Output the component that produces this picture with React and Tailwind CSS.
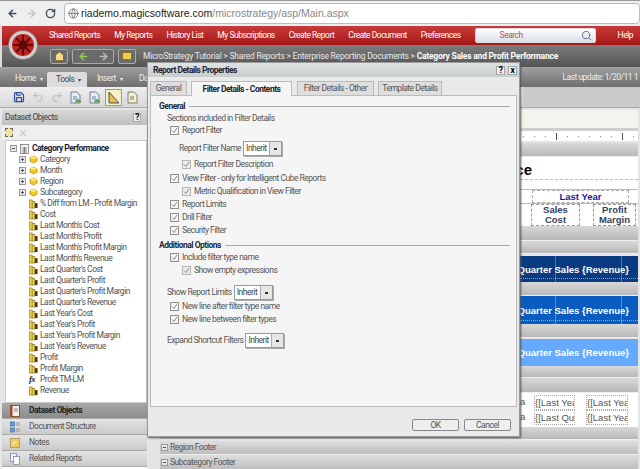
import React from "react";
import { ArrowLeft, ArrowRight, RotateCw, Globe, Search, X, Save, Undo2, Redo2, Home } from "lucide-react";

const navItems = ["Shared Reports", "My Reports", "History List", "My Subscriptions", "Create Report", "Create Document", "Preferences"];

const metrics = [
  "% Diff from LM - Profit Margin", "Cost", "Last Month's Cost", "Last Month's Profit", "Last Month's Profit Margin",
  "Last Month's Revenue", "Last Quarter's Cost", "Last Quarter's Profit", "Last Quarter's Profit Margin", "Last Quarter's Revenue",
  "Last Year's Cost", "Last Year's Profit", "Last Year's Profit Margin", "Last Year's Revenue", "Profit", "Profit Margin",
];

function Cube() {
  return (
    <svg width="9" height="9" viewBox="0 0 10 10" className="shrink-0">
      <path d="M1 3 L5 1 L9 3 L9 7 L5 9 L1 7 Z" fill="#f0c419" stroke="#a08214" strokeWidth="0.6" />
      <path d="M1 3 L5 4.6 L9 3 L5 1 Z" fill="#fbe77a" />
    </svg>
  );
}

function MetricIcon() {
  return (
    <svg width="9" height="10" viewBox="0 0 10 10" className="shrink-0">
      <rect x="0.5" y="0.5" width="3" height="9" fill="#f2d64b" stroke="#7a6410" strokeWidth="0.6" />
      <rect x="3.5" y="2" width="3" height="7.5" fill="#f2d64b" stroke="#7a6410" strokeWidth="0.6" />
      <rect x="6.5" y="4" width="3" height="5.5" fill="#4a3808" />
    </svg>
  );
}

function ReportIcon() {
  return (
    <svg width="9" height="10" viewBox="0 0 9 10" className="shrink-0">
      <rect x="0.5" y="0.5" width="8" height="9" fill="#f4f4f4" stroke="#666" strokeWidth="0.7" />
      <path d="M2 4 H7 M2 6 H7 M2 8 H7 M4.5 3 V9" stroke="#555" strokeWidth="0.7" />
    </svg>
  );
}

function ExpandBox({ minus }) {
  return (
    <span className="relative w-[7px] h-[7px] shrink-0 border border-[#9a9a9a] bg-[#e8e8e8] flex items-center justify-center">
      <span className="w-[3px] h-px bg-[#555]" />
      {!minus && <span className="absolute w-px h-[3px] bg-[#555]" />}
    </span>
  );
}

function Check({ dim }) {
  return (
    <span className={`w-[9px] h-[9px] shrink-0 border flex items-center justify-center ${dim ? "border-[#b5b5b5] bg-[#ececec]" : "border-[#8f8f8f] bg-[#f4f4f4]"}`}>
      <svg width="7" height="7" viewBox="0 0 7 7">
        <path d="M1 3.5 L3 5.5 L6 1" fill="none" stroke="#8a8a8a" strokeWidth="1" />
      </svg>
    </span>
  );
}

function CheckRow({ label, indent, dim, className = "" }) {
  return (
    <div className={`h-[13px] flex items-center gap-[3px] ${indent ? "pl-[31px]" : "pl-[19px]"} ${className}`}>
      <Check dim={dim} />
      <span>{label}</span>
    </div>
  );
}

function Select() {
  return (
    <span className="w-[39px] h-[15px] flex border border-[#9a9a9a] bg-white shadow-[1px_1px_0_#aaa]">
      <span className="flex-1 pl-[2px] leading-[13px] text-[#444]">Inherit</span>
      <span className="w-[12px] bg-[#e6e6e6] border-l border-[#aaa] flex items-center justify-center">
        <span className="w-[3px] h-[2px] bg-[#333]" />
      </span>
    </span>
  );
}

function Legend({ children }) {
  return (
    <div className="h-[12px] flex items-center gap-[4px] pl-[8px] pr-[6px]">
      <span className="font-bold text-[#1c2a44]">{children}</span>
      <span className="flex-1 h-px bg-[#aaa]" />
    </div>
  );
}

function Band({ h }) {
  return <div className={`${h} shrink-0 bg-gradient-to-b from-[#d8d8d8] to-[#b8b8b8] border-b border-[#eee]`} />;
}

function BlueRow({ h, bg, lines }) {
  return (
    <div className={`${h} shrink-0 relative flex items-center font-bold text-white text-[9.5px] tracking-normal whitespace-nowrap ${bg}`}>
      <div className="w-[469px] text-right">Last Quarter Sales {"{Revenue}"}</div>
      {lines && <span className="absolute left-[395px] top-0 bottom-0 w-px bg-white/30" />}
      {lines && <span className="absolute left-[461px] top-0 bottom-0 w-px bg-white/30" />}
      {lines && <span className="absolute left-[360px] right-0 bottom-[3px] border-b border-dotted border-white/50" />}
    </div>
  );
}

function PageIcon({ fill = "#e4edf5", mark }) {
  return (
    <span className="w-[17px] h-[17px] flex items-center justify-center">
      <svg width="13" height="13" viewBox="0 0 13 13">
        <path d="M2 1 H8 L11 4 V12 H2 Z" fill={fill} stroke="#667" strokeWidth="0.8" />
        <path d="M4 6 H8 M4 8 H8" stroke="#3a6a9a" strokeWidth="0.8" />
        {mark && <path d="M6 11 L9 8 L12 11 Z" fill={mark} stroke="#2e7d32" strokeWidth="0.5" />}
      </svg>
    </span>
  );
}

function AccordionItem({ label, active, icon }) {
  return (
    <div className={`h-[16px] flex items-center gap-[9px] pl-[8px] border-b border-[#aaa] ${active ? "bg-gradient-to-b from-[#a8a8a8] to-[#8c8c8c] font-bold text-[#222]" : "bg-gradient-to-b from-[#e4e4e4] to-[#cacaca] text-[#555]"}`}>
      <svg width="10" height="12" viewBox="0 0 10 12" className="shrink-0">
        {icon}
      </svg>
      <span>{label}</span>
    </div>
  );
}

function MenuTab({ label, className }) {
  return (
    <span className={`flex gap-[4px] ${className}`}>
      {label}
      <span className="text-[6px] leading-[12px]">▾</span>
    </span>
  );
}

export default function App() {
  return (
    <div className="relative w-[640px] h-[469px] overflow-hidden flex flex-col bg-[#dcdcdc] font-['Roboto',sans-serif] text-[8.5px] leading-[11px] tracking-[-0.5px] text-[#555]">
      {/* browser bar */}
      <div className="h-[26px] shrink-0 flex items-center gap-[8px] pl-[7px] bg-[#efefef] border-t border-[#999]">
        <ArrowLeft className="w-[11px] h-[11px] text-[#3d4f66]" strokeWidth={3.5} />
        <ArrowRight className="w-[11px] h-[11px] text-[#c8c8c8]" strokeWidth={3.5} />
        <RotateCw className="w-[11px] h-[11px] text-[#3d4f66]" strokeWidth={3} />
        <div className="flex-1 h-[21px] flex items-center gap-[2px] pl-[3px] bg-white border border-[#bbb] rounded-[4px] text-[10.5px] tracking-normal font-['Liberation_Sans',sans-serif]">
          <Globe className="w-[11px] h-[11px] text-[#777]" />
          <span className="text-[#222]">riademo.magicsoftware.com<span className="text-[#888]">/microstrategy/asp/Main.aspx</span></span>
        </div>
      </div>

      {/* red nav */}
      <div className="h-[19px] shrink-0 flex items-center pl-[47px] pr-[7px] ml-[2px] bg-gradient-to-b from-[#c93a3a] to-[#a51616] text-white whitespace-nowrap">
        <div className="flex gap-[14px]">
          {navItems.map((item) => (
            <span key={item}>{item}</span>
          ))}
        </div>
        <div className="w-[121px] h-[15px] ml-[14px] flex items-center justify-between pl-[24px] pr-[3px] rounded-[2px] border border-[#ddd] bg-gradient-to-b from-white to-[#d6e0e8] text-[#c05050]">
          Search
          <Search className="w-[11px] h-[11px] text-[#667]" />
        </div>
        <span className="ml-auto">Help</span>
      </div>

      {/* breadcrumb bar */}
      <div className="h-[22px] shrink-0 flex items-center ml-[2px] pl-[48px] bg-gradient-to-b from-[#7c7c7c] to-[#555] text-[#e8e8e8] tracking-[-0.22px] whitespace-nowrap">
        <span className="w-[18px] h-[15px] flex items-center justify-center border border-[#aaa] rounded-[2px] bg-[#6a6a6a]">
          <Home className="w-[11px] h-[11px] text-[#7a5a20] fill-[#f5dc90]" />
        </span>
        <span className="ml-[4px] w-[42px] h-[15px] flex items-center justify-around border border-[#aaa] rounded-[2px] bg-[#6a6a6a]">
          <ArrowLeft className="w-[11px] h-[11px] text-[#8fd14f]" strokeWidth={3.5} />
          <ArrowRight className="w-[11px] h-[11px] text-[#bbb]" strokeWidth={3.5} />
        </span>
        <span className="ml-[4px] w-[18px] h-[15px] flex items-center justify-center border border-[#aaa] rounded-[2px] bg-[#6a6a6a]">
          <span className="w-[10px] h-[8px] bg-[#f0cf50] border border-[#8a7020]" />
        </span>
        <span className="ml-[7px]">MicroStrategy Tutorial &gt; Shared Reports &gt; Enterprise Reporting Documents &gt; <b className="text-white">Category Sales and Profit Performance</b></span>
      </div>

      {/* menu tabs */}
      <div className="h-[20px] shrink-0 flex items-end pl-[15px] pr-[2px] bg-gradient-to-b from-[#a0a0a0] to-[#6e6e6e] text-[#eee] whitespace-nowrap">
        <MenuTab label="Home" className="h-[14px] w-[32px]" />
        <MenuTab label="Tools" className="h-[15px] w-[40px] pl-[9px] pt-[2px] rounded-t-[2px] bg-[#dcdcdc] text-[#444]" />
        <MenuTab label="Insert" className="h-[14px] w-[42px] ml-[10px]" />
        <span className="h-[14px]">Data</span>
        <span className="h-[14px] ml-auto self-center pt-[2px]">Last update: 1/20/11 1</span>
      </div>

      {/* toolbar */}
      <div className="h-[21px] shrink-0 flex items-center gap-[2px] pl-[10px] bg-gradient-to-b from-[#efefef] to-[#d8d8d8] border-b border-[#aaa]">
        <span className="w-[17px] h-[17px] flex items-center justify-center">
          <Save className="w-[12px] h-[12px] text-[#2c4f9e]" strokeWidth={2.5} />
        </span>
        <span className="w-[17px] h-[17px] flex items-center justify-center">
          <Undo2 className="w-[12px] h-[12px] text-[#c4c4c4]" strokeWidth={2.5} />
        </span>
        <span className="w-[17px] h-[17px] flex items-center justify-center">
          <Redo2 className="w-[12px] h-[12px] text-[#c4c4c4]" strokeWidth={2.5} />
        </span>
        <PageIcon mark="#5cb85c" />
        <PageIcon mark="#5cb85c" />
        <span className="w-[17px] h-[17px] flex items-center justify-center border border-[#999] bg-[#f6efc8]">
          <svg width="13" height="13" viewBox="0 0 13 13">
            <path d="M2 1 V12 H12 Z" fill="#f0c030" stroke="#3a4f8a" strokeWidth="1" />
          </svg>
        </span>
        <PageIcon fill="#f5efc0" />
        <span className="flex-1 self-stretch ml-[380px] bg-[#cacaca]" />
      </div>

      <div className="flex-1 flex min-h-0">
        {/* dataset objects panel */}
        <div className="w-[147px] shrink-0 flex flex-col bg-[#e6e6e6] pl-[2px]">
          <div className="h-[15px] mt-[2px] shrink-0 flex items-center justify-between pl-[3px] bg-gradient-to-b from-[#d8d8d8] to-[#c0c0c0] text-[#444]">
            Dataset Objects
            <span className="w-[8px] h-[9px] mr-[6px] flex items-center justify-center bg-[#eee] border border-[#aaa] text-black font-bold leading-none">?</span>
          </div>
          <div className="h-[15px] shrink-0 flex items-center gap-[5px] pl-[3px] bg-[#efefef]">
            <span className="w-[8px] h-[9px] border border-dashed border-[#666] bg-[#f4e39a]" />
            <X className="w-[10px] h-[10px] text-[#ccc]" strokeWidth={3} />
          </div>
          <div className="flex-1 pt-[2px] pl-[4px] ml-[3px] bg-white border border-[#c8c8c8] whitespace-nowrap">
            <div className="h-[11px] flex items-center gap-[3px] font-bold text-[#1c2333]">
              <ExpandBox minus />
              <ReportIcon />
              Category Performance
            </div>
            {["Category", "Month", "Region", "Subcategory"].map((name) => (
              <div key={name} className="h-[11px] flex items-center gap-[3px] pl-[9px]">
                <ExpandBox />
                <Cube />
                <span className="-ml-px">{name}</span>
              </div>
            ))}
            {metrics.map((name) => (
              <div key={name} className="h-[11px] flex items-center gap-[2px] pl-[19px]">
                <MetricIcon />
                {name}
              </div>
            ))}
            <div className="h-[11px] flex items-center gap-[2px] pl-[19px]">
              <span className="w-[9px] font-['Liberation_Serif',serif] italic font-bold text-[#222]">fx</span>
              Profit TM-LM
            </div>
            <div className="h-[11px] flex items-center gap-[2px] pl-[19px]">
              <MetricIcon />
              Revenue
            </div>
          </div>
          <AccordionItem
            label="Dataset Objects"
            active
            icon={
              <>
                <rect x="0.5" y="0.5" width="9" height="11" fill="#f4efe6" stroke="#7a3a20" strokeWidth="0.8" />
                <rect x="0.5" y="0.5" width="2" height="11" fill="#b5451f" />
                <path d="M4 4 H8 M4 6 H8" stroke="#778" strokeWidth="0.8" />
              </>
            }
          />
          <AccordionItem
            label="Document Structure"
            icon={
              <>
                <rect x="0.5" y="1" width="4" height="4" fill="#6a9ad8" stroke="#35609a" strokeWidth="0.6" />
                <rect x="0.5" y="7" width="4" height="4" fill="#6a9ad8" stroke="#35609a" strokeWidth="0.6" />
                <path d="M6 2 H10 M6 4 H10 M6 8 H10 M6 10 H10" stroke="#888" strokeWidth="0.8" />
              </>
            }
          />
          <AccordionItem
            label="Notes"
            icon={
              <>
                <rect x="0.5" y="1.5" width="9" height="9" fill="#f2c860" stroke="#a08a50" strokeWidth="0.7" />
                <path d="M2 8 L6 4" stroke="#f8e4a8" strokeWidth="1.5" />
              </>
            }
          />
          <AccordionItem
            label="Related Reports"
            icon={
              <>
                <rect x="0.5" y="0.5" width="6" height="8" fill="#f4f4f4" stroke="#6a7f9a" strokeWidth="0.7" />
                <rect x="3.5" y="3.5" width="6" height="8" fill="#fafafa" stroke="#6a7f9a" strokeWidth="0.7" />
              </>
            }
          />
          <div className="h-[2px] shrink-0 bg-white" />
        </div>

        {/* layout canvas */}
        <div className="flex-1 flex flex-col pl-[13px] pr-[2px] bg-[#e4e4e4] font-['Liberation_Sans',sans-serif] tracking-normal whitespace-nowrap">
          <div className="h-[2px] shrink-0" />
          <div className="h-[18px] shrink-0 -ml-[13px] bg-[#f4f4ee]" />
          <div className="h-[3px] shrink-0 -ml-[13px] bg-[#cfcfcf]" />
          <div className="h-[10px] shrink-0 flex items-center gap-[10px] pl-[363px] bg-white">
            {Array.from({ length: 11 }).map((_, i) => (
              <span key={i} className={`w-px ${i % 6 === 3 ? "h-[7px] bg-[#555]" : "h-px bg-[#888]"}`} />
            ))}
          </div>
          <div className="h-[2px] shrink-0" />
          <Band h="h-[14px]" />
          <div className="h-[23px] pt-[3px] shrink-0 flex items-center bg-white border-b border-dashed border-[#bbb] text-black font-bold text-[15px]">
            <div className="w-[372px] text-right">Category Sales and Profit Performance</div>
          </div>
          <div className="h-[9px] shrink-0 bg-white" />
          <div className="h-[14px] shrink-0 flex bg-white border-t border-[#bbb] font-bold text-[9.5px] leading-[12px] text-[#1a1a9a]">
            <div className="w-[372px]" />
            <div className="w-[97px] text-center border border-dashed border-[#aaa]">Last Year</div>
          </div>
          <div className="h-[23px] shrink-0 flex bg-white border-t border-[#bbb] font-bold text-[9.5px] text-[#35405a] leading-[10px]">
            <div className="w-[371px]" />
            <div className="w-[49px] text-center border border-dashed border-[#999]">Sales<br />Cost</div>
            <div className="w-[13px]" />
            <div className="w-[43px] text-center border border-dashed border-[#999]">Profit<br />Margin</div>
          </div>
          <Band h="h-[15px]" />
          <Band h="h-[13px]" />
          <div className="h-[2px] shrink-0" />
          <BlueRow h="h-[26px]" bg="bg-[#0a3a80]" lines />
          <Band h="h-[14px]" />
          <BlueRow h="h-[28px]" bg="bg-[#0a5cc0]" lines />
          <Band h="h-[14px]" />
          <div className="h-px shrink-0" />
          <BlueRow h="h-[27px]" bg="bg-[#66aaff]" />
          <Band h="h-[12px]" />
          <Band h="h-[15px]" />
          <div className="h-[34px] shrink-0 flex flex-col justify-center bg-white text-[9.5px] text-[#555] leading-[13px] overflow-hidden">
            {["Last Year", "Last Quarter"].map((name) => (
              <div key={name} className="flex">
                <div className="w-[360px]" />
                <span className="w-[14px] overflow-hidden">a</span>
                <span className="w-[41px] overflow-hidden border border-dotted border-[#aaa] mr-[11px]">{`{[${name}`}</span>
                <span className="w-[42px] overflow-hidden border border-dotted border-[#aaa]">{"{[Last Year"}</span>
              </div>
            ))}
          </div>
          <Band h="h-[13px]" />
          <div className="h-px shrink-0" />
          <div className="h-[14px] shrink-0 flex items-center gap-[2px] pl-[1px] bg-gradient-to-b from-[#dedede] to-[#bdbdbd] border-b border-[#eee] font-['Roboto',sans-serif] tracking-[-0.5px]">
            <ExpandBox minus />
            Region Footer
          </div>
          <div className="h-[14px] shrink-0 flex items-center gap-[2px] pl-[1px] bg-gradient-to-b from-[#dedede] to-[#bdbdbd] font-['Roboto',sans-serif] tracking-[-0.5px]">
            <ExpandBox minus />
            Subcategory Footer
          </div>
        </div>
      </div>

      {/* logo over the red and grey bars */}
      <svg width="30" height="30" viewBox="0 0 30 30" className="absolute left-[8px] top-[30px]">
        <circle cx="15" cy="15" r="14.5" fill="#cfcfcf" stroke="#777" strokeWidth="0.6" />
        <circle cx="15" cy="15" r="11" fill="#c02020" />
        <path d="M15 5 V25 M5 15 H25 M8 8 L22 22 M22 8 L8 22" stroke="#4a0505" strokeWidth="1.6" />
        <circle cx="15" cy="15" r="4.5" fill="#5a0808" />
      </svg>

      {/* details dialog */}
      <div className="absolute left-[147px] top-[62px] w-[373px] h-[375px] flex flex-col bg-[#e9e9e9] border border-[#9a9a9a] shadow-[1px_1px_2px_#555] whitespace-nowrap">
        <div className="h-[14px] shrink-0 flex items-center justify-between pl-[5px] pr-[2px] bg-gradient-to-b from-[#e0e3e3] to-[#c8cccc] font-bold text-[#1c2333]">
          Report Details Properties
          <div className="flex gap-[3px]">
            <span className="w-[9px] h-[9px] flex items-center justify-center bg-[#eee] border border-[#aaa] text-black leading-none">?</span>
            <span className="w-[9px] h-[9px] flex items-center justify-center bg-[#eee] border border-[#aaa] text-black leading-none">x</span>
          </div>
        </div>
        <div className="h-[18px] shrink-0 flex items-end pl-[2px]">
          <span className="h-[14px] w-[37px] flex justify-center items-center bg-[#dedede] border border-b-0 border-[#bbb]">General</span>
          <span className="h-[15px] w-[101px] ml-[4px] flex justify-center items-center bg-[#f5f5f5] border border-b-0 border-[#bbb] font-bold text-[#1c2333] relative top-px">Filter Details - Contents</span>
          <span className="h-[14px] w-[77px] ml-[5px] flex justify-center items-center bg-[#dedede] border border-b-0 border-[#bbb]">Filter Details - Other</span>
          <span className="h-[14px] w-[64px] ml-[4px] flex justify-center items-center bg-[#dedede] border border-b-0 border-[#bbb]">Template Details</span>
        </div>
        <div className="h-[312px] shrink-0 mx-[2px] pt-[4px] bg-[#f5f5f5] border border-[#bbb]">
          <Legend>General</Legend>
          <div className="h-[12px] pl-[16px] flex items-center">Sections included in Filter Details</div>
          <CheckRow label="Report Filter" />
          <div className="h-[15px] mt-[4px] pl-[28px] flex items-center gap-[2px]">
            Report Filter Name
            <Select />
          </div>
          <CheckRow label="Report Filter Description" indent dim className="mt-[2px]" />
          <CheckRow label="View Filter - only for Intelligent Cube Reports" className="mt-px" />
          <CheckRow label="Metric Qualification in View Filter" indent dim />
          <CheckRow label="Report Limits" />
          <CheckRow label="Drill Filter" />
          <CheckRow label="Security Filter" />
          <div className="mt-[2px]"><Legend>Additional Options</Legend></div>
          <CheckRow label="Include filter type name" />
          <CheckRow label="Show empty expressions" indent dim />
          <div className="h-[15px] mt-[8px] pl-[16px] flex items-center gap-[2px]">
            Show Report Limits
            <Select />
          </div>
          <CheckRow label="New line after filter type name" />
          <CheckRow label="New line between filter types" />
          <div className="h-[15px] mt-[7px] pl-[16px] flex items-center gap-[2px]">
            Expand Shortcut Filters
            <Select />
          </div>
        </div>
        <div className="flex-1 flex items-end justify-end gap-[5px] pr-[8px] pb-[5px]">
          <span className="w-[47px] h-[12px] flex items-center justify-center bg-[#eee] border border-[#888] rounded-[2px]">OK</span>
          <span className="w-[47px] h-[12px] flex items-center justify-center bg-[#eee] border border-[#888] rounded-[2px]">Cancel</span>
        </div>
      </div>
    </div>
  );
}
